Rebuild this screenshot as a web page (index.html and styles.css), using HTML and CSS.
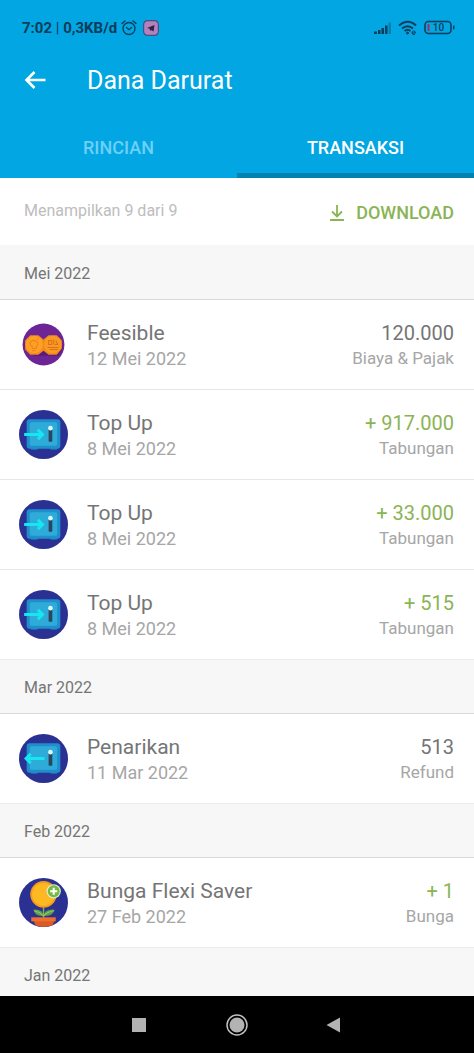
FILE: index.html
```html
<!DOCTYPE html>
<html lang="id">
<head>
<meta charset="utf-8">
<meta name="viewport" content="width=device-width, initial-scale=1">
<title>Dana Darurat</title>
<link rel="stylesheet" href="styles.css">
</head>
<body>
<svg class="sprite" aria-hidden="true">
  <symbol id="safe" viewBox="0 0 48 48">
    <circle cx="24" cy="24" r="24" fill="#2b3193"/>
    <path d="M11 37h8l-1 2h-6zM30 37h8l-1 2h-6z" fill="#1b78b8"/>
    <rect x="7.500" y="9" width="33" height="29" rx="3" fill="#1f8fcc"/>
    <rect x="10.500" y="12" width="27" height="23" rx="2" fill="#2fabda"/>
    <rect x="29" y="18.500" width="3.600" height="12.500" rx=".6" fill="#28475f"/>
    <circle cx="30.800" cy="17.800" r="2.300" fill="#d8f5fb"/>
  </symbol>
  <symbol id="safe-in" viewBox="0 0 48 48">
    <use href="#safe"/>
    <path d="M5 24h18" fill="none" stroke="#16e6f0" stroke-width="3"/><path d="M18.500 19.500L23 24l-4.500 4.500" fill="none" stroke="#16e6f0" stroke-width="3"/>
  </symbol>
  <symbol id="safe-out" viewBox="0 0 48 48">
    <use href="#safe"/>
    <path d="M25 24H7" fill="none" stroke="#16e6f0" stroke-width="3"/><path d="M11.500 19.500L7 24l4.500 4.500" fill="none" stroke="#16e6f0" stroke-width="3"/>
  </symbol>
</svg>

<header class="top">
  <div class="status">
    <div class="status-left">
      <span>7:02 <span class="thin">|</span> 0,3KB/d</span>
      <svg width="16" height="16" viewBox="0 0 16 16" fill="none" stroke="#0b3d5c" stroke-width="1.300" stroke-linecap="round"><circle cx="8" cy="8.500" r="6"/><path d="M1 3.500L4 1M15 3.500L12 1M5.500 7.500L8 9.700l2.500-2.200"/></svg>
      <svg class="app-badge" width="16" height="16" viewBox="0 0 16 16"><rect x=".6" y=".6" width="14.800" height="14.800" rx="4" fill="#b381bd" stroke="#47507f" stroke-width="1.200"/><path d="M4 8l7.500-3-1 6.500-2.500-1.500-1 1-.2-2.200z" fill="#30213f"/></svg>
    </div>
    <div class="status-right">
      <svg width="18" height="14" viewBox="0 0 18 14" fill="#0b3d5c"><path d="M0 10.500h3V13H0zM4 9h2.500v4H4zM7.500 7H10v6H7.500zM11 4.500h2.500V13H11z"/><path d="M14.500 1.500h2.500V13h-2.500z" opacity=".35"/></svg>
      <svg width="20" height="16" viewBox="0 0 20 16" fill="none" stroke="#0b3d5c" stroke-width="2"><path d="M1 5.500Q10-2 18 5.500M4 8.500q5.500-4.500 11 0M6.500 11q3-2.500 6 0"/><circle cx="9.500" cy="13" r="1" fill="#0b3d5c" stroke-width="1"/><path d="M14 13h3.500q0-2-1.800-2-1.700.2-1.700 2 .1 1.900 3 1.500" stroke-width="1"/></svg>
      <svg width="32" height="16" viewBox="0 0 32 16"><rect x="1" y="1.500" width="26" height="12" rx="3.500" fill="none" stroke="#0b3d5c" stroke-width="1.500"/><rect x="29" y="5.500" width="1.500" height="4" rx=".7" fill="#0b3d5c"/><rect x="3.500" y="4" width="2" height="7" fill="#b02858"/><text x="14.500" y="11" class="battery-text">10</text></svg>
    </div>
  </div>
  <div class="title-bar">
    <button class="back" aria-label="Kembali"><svg width="24" height="24" viewBox="0 0 24 24" fill="none" stroke="#fff" stroke-width="2.600"><path d="M22.500 11H3M11.500 3l-8 8 8 8"/></svg></button>
    <h1>Dana Darurat</h1>
  </div>
  <nav class="tabs">
    <button class="tab">RINCIAN</button>
    <button class="tab active">TRANSAKSI</button>
  </nav>
</header>

<main class="content">
  <div class="toolbar">
    <p>Menampilkan 9 dari 9</p>
    <button class="download"><svg width="14" height="18" viewBox="0 0 14 18" fill="none" stroke="#8ab455" stroke-width="1.800"><path d="M7 1v11.500M2 7.500l5 5 5-5M0 16h14"/></svg>DOWNLOAD</button>
  </div>

  <h2 class="month">Mei 2022</h2>
  <ul class="list">
    <li class="row">
      <svg class="icon" viewBox="0 0 48 48"><circle cx="24" cy="24" r="20.500" fill="#6d2595"/><path d="M10 32l5 3h24l4-8z" fill="#571b7d"/><path d="M11 15h8l5 4 5-4h8l5 5v8l-5 6h-8l-5-4-5 4h-8l-5-5v-9z" fill="#f08a1c"/><circle cx="15" cy="24" r="8.500" fill="#ff9f25"/><circle cx="33" cy="24" r="8.500" fill="#fb9a23"/><path d="M13 28v-2q-3-2-2-4 2-3.500 6-1 3 2 0 5v2zM13 30h3M9 18l1 1M19 18l-1 1" fill="none" stroke="#ea8419"/><path d="M29 20h3v4h-3zM34 19v5M36 20l2 4h-3M28 27h11M30 29h8" fill="none" stroke="#d8721a"/></svg>
      <div class="main"><h3>Feesible</h3><p>12 Mei 2022</p></div>
      <div class="amount"><strong>120.000</strong><p>Biaya &amp; Pajak</p></div>
    </li>
    <li class="row">
      <svg class="icon"><use href="#safe-in"/></svg>
      <div class="main"><h3>Top Up</h3><p>8 Mei 2022</p></div>
      <div class="amount"><strong class="plus">+ 917.000</strong><p>Tabungan</p></div>
    </li>
    <li class="row">
      <svg class="icon"><use href="#safe-in"/></svg>
      <div class="main"><h3>Top Up</h3><p>8 Mei 2022</p></div>
      <div class="amount"><strong class="plus">+ 33.000</strong><p>Tabungan</p></div>
    </li>
    <li class="row">
      <svg class="icon"><use href="#safe-in"/></svg>
      <div class="main"><h3>Top Up</h3><p>8 Mei 2022</p></div>
      <div class="amount"><strong class="plus">+ 515</strong><p>Tabungan</p></div>
    </li>
  </ul>

  <h2 class="month">Mar 2022</h2>
  <ul class="list">
    <li class="row">
      <svg class="icon"><use href="#safe-out"/></svg>
      <div class="main"><h3>Penarikan</h3><p>11 Mar 2022</p></div>
      <div class="amount"><strong>513</strong><p>Refund</p></div>
    </li>
  </ul>

  <h2 class="month">Feb 2022</h2>
  <ul class="list">
    <li class="row">
      <svg class="icon" viewBox="0 0 48 48"><circle cx="24" cy="24" r="24" fill="#2b3193"/><path d="M24 25v15" stroke="#7fb54a" stroke-width="1.500"/><circle cx="24" cy="16" r="13" fill="#f59b1b"/><circle cx="24" cy="16" r="11.200" fill="#fdb822"/><path d="M24 37q-1-7-10-6 2 7 10 6zM24 37q1-7 11-6-2 7-11 6z" fill="#5c9e49"/><path d="M15 32q5 1 9 5 4-4 10-5" fill="none" stroke="#91c667"/><path d="M14 41h21l-2 5.300q-9 3.200-17 0z" fill="#d95b26"/><path d="M12 38.500h24v4H12z" fill="#ee6e2d"/><circle cx="34" cy="13" r="7" fill="#dcefcf"/><circle cx="34" cy="13" r="5.800" fill="#78b842"/><path d="M34 9.500v7M30.500 13h7" stroke="#fff" stroke-width="2"/></svg>
      <div class="main"><h3>Bunga Flexi Saver</h3><p>27 Feb 2022</p></div>
      <div class="amount"><strong class="plus">+ 1</strong><p>Bunga</p></div>
    </li>
  </ul>

  <h2 class="month">Jan 2022</h2>
</main>

<footer class="system-nav">
  <button aria-label="Aplikasi terbaru"><svg width="24" height="24" viewBox="0 0 24 24"><path d="M4 5h14v14H4z" fill="#b3b3b3"/></svg></button>
  <button aria-label="Beranda"><svg width="24" height="24" viewBox="0 0 24 24"><circle cx="12" cy="12" r="10" fill="none" stroke="#c0c0c0" stroke-width="1.500"/><circle cx="12" cy="12" r="7.500" fill="#b3b3b3"/></svg></button>
  <button aria-label="Kembali"><svg width="24" height="24" viewBox="0 0 24 24"><path d="M18 4.500v15L4.500 12z" fill="#b3b3b3"/></svg></button>
</footer>
</body>
</html>
```
FILE: styles.css
```css
* { box-sizing: border-box; }

body {
  margin: 0;
  height: 100vh;
  display: flex;
  flex-direction: column;
  background: #fff;
  color: #757575;
  font-family: Roboto, "Liberation Sans", sans-serif;
}

h1, h2, h3, p, ul { margin: 0; padding: 0; font-weight: 400; }
button { border: 0; padding: 0; background: none; font: inherit; color: inherit; }
svg { display: block; flex: none; }
.sprite { position: absolute; width: 0; height: 0; }

.top { flex: none; background: #02a6e2; color: #fff; }

.status {
  display: flex;
  justify-content: space-between;
  align-items: center;
  height: 48px;
  padding: 8px 18px 0 22px;
  color: #0b3d5c;
  font-size: 15px;
  font-weight: 700;
}
.status-left, .status-right { display: flex; align-items: center; }
.status-left { gap: 4px; }
.status-right { gap: 6px; }
.thin { font-weight: 400; }
.app-badge { margin-left: 2px; }
.battery-text { font-size: 10px; font-weight: 500; text-anchor: middle; fill: #0b3d5c; }

.title-bar { display: flex; align-items: center; gap: 40px; height: 66px; padding: 0 23px; }
h1 { font-size: 25px; line-height: 32px; }

.tabs { display: flex; height: 64px; }
.tab {
  flex: 1;
  padding-top: 8px;
  border-bottom: 5px solid transparent;
  color: #6dd0f7;
  font-size: 18px;
  font-weight: 500;
}
.tab.active { color: #fff; border-color: #0282b0; }

.content { flex: 1; min-height: 0; overflow-y: auto; scrollbar-width: none; }

.toolbar {
  display: flex;
  justify-content: space-between;
  align-items: center;
  height: 67px;
  padding: 2px 20px 0 24px;
}
.toolbar p { padding-bottom: 4px; color: #bdbdbd; font-size: 16px; }
.download {
  display: flex;
  align-items: center;
  gap: 12px;
  color: #8ab455;
  font-size: 18px;
  font-weight: 500;
}

.month {
  height: 54px;
  padding: 0 24px;
  border-top: 1px solid #ececec;
  background: #f7f7f7;
  font-size: 16px;
  line-height: 56px;
}
.toolbar + .month { border-color: #f7f7f7; }

.list { list-style: none; }
.row {
  display: flex;
  align-items: center;
  height: 90px;
  padding: 0 20px 0 19px;
  border-top: 1px solid #e6e6e6;
}
.row:first-child { border-color: #d8d8d8; }
.icon { width: 49px; height: 49px; margin-right: 19px; }
.main { flex: 1; padding-top: 2px; }
.amount { text-align: right; }
h3, strong { display: block; font-size: 21px; line-height: 26px; font-weight: 400; }
.row p { color: #a6a6a6; font-size: 18px; line-height: 26px; }
.amount strong { font-size: 20px; }
.amount p { font-size: 17px; line-height: 24px; }
.amount .plus { color: #8ab455; }

.system-nav {
  flex: none;
  display: flex;
  justify-content: center;
  align-items: center;
  gap: 73px;
  height: 57px;
  background: #000;
}
```
